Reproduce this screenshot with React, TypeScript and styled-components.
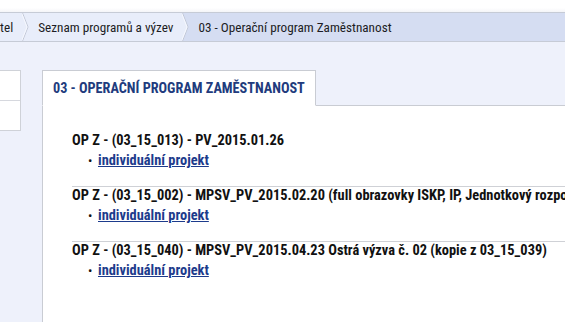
import React from "react";
import styled, { createGlobalStyle } from "styled-components";

const Global = createGlobalStyle`
  html, body { margin: 0; padding: 0; overflow: hidden; }
  body {
    background: #eef1fb;
    font-family: "Roboto Condensed", "Liberation Sans Narrow", sans-serif;
    color: #151515;
  }
`;

const Page = styled.div`
  width: 565px;
  height: 322px;
  overflow: hidden;
  display: flex;
  flex-direction: column;
`;

const TopStrip = styled.div`
  height: 12px;
  background: linear-gradient(#ffffff 0, #ffffff 8px, #f4f5f8 12px);
  flex: none;
`;

const Breadcrumb = styled.nav`
  flex: none;
  height: 28px;
  display: flex;
  align-items: stretch;
  background: #e8edfa;
  border-top: 1px solid #c6cbd6;
  border-bottom: 1px solid #c6cbd6;
  overflow: hidden;
  white-space: nowrap;
`;

const Crumb = styled.div<{ $active?: boolean; $shift?: number }>`
  display: flex;
  align-items: center;
  font-size: 13.2px;
  color: #1c1c24;
  padding: 0 ${(p) => (p.$active ? "0" : "9px")} 0 8px;
  margin-left: ${(p) => (p.$shift ? `${p.$shift}px` : "0")};
  background: ${(p) => (p.$active ? "#d5ddf2" : "transparent")};
  flex: ${(p) => (p.$active ? "1" : "none")};
`;

const ChevronSvg = styled.svg`
  flex: none;
  display: block;
`;

const Chevron = ({ active }: { active?: boolean }) => (
  <ChevronSvg width="8" height="28" viewBox="0 0 8 28" preserveAspectRatio="none">
    {active && <polygon points="0,0 8,0 8,28 0,28 6,14" fill="#d5ddf2" />}
    <polyline points="0.5,0 6,14 0.5,28" fill="none" stroke="#c2c8d6" strokeWidth="1" />
    <polyline points="-0.5,0 5,14 -0.5,28" fill="none" stroke="#f6f8fe" strokeWidth="1" />
  </ChevronSvg>
);

const Main = styled.div`
  flex: 1;
  display: flex;
  align-items: flex-start;
  gap: 21px;
  padding-top: 28px;
  min-height: 0;
`;

const SideBox = styled.div`
  flex: none;
  width: 20px;
  background: #ffffff;
  border: 1px solid #cfd2d8;
  border-left: none;
`;

const SideRow = styled.div<{ $first?: boolean }>`
  height: 29px;
  border-top: ${(p) => (p.$first ? "none" : "1px solid #d6d8de")};
`;

const Content = styled.section`
  flex: 1;
  min-width: 0;
  display: flex;
  flex-direction: column;
`;

const Tabs = styled.div`
  display: flex;
  margin-bottom: -1px;
  position: relative;
  z-index: 1;
`;

const Tab = styled.div`
  box-sizing: border-box;
  height: 36px;
  padding: 0 10px;
  display: flex;
  align-items: center;
  background: #ffffff;
  border: 1px solid #c9ccd3;
  border-bottom: 1px solid #ffffff;
  font-size: 14.2px;
  font-weight: 700;
  color: #213b7d;
  white-space: nowrap;
`;

const Panel = styled.div`
  background: #ffffff;
  border-top: 1px solid #c9ccd3;
  border-left: 1px solid #c9ccd3;
  padding: 25px 0 0 29px;
  height: 260px;
  white-space: nowrap;
  overflow: hidden;
`;

const Item = styled.div<{ $first?: boolean }>`
  border-top: ${(p) => (p.$first ? "1px solid transparent" : "1px solid #cfd1d6")};
  padding: 0 0 15px 0;
`;

const Title = styled.div`
  font-size: 14.4px;
  font-weight: 700;
  line-height: 18px;
  color: #111111;
`;

const LinkRow = styled.div`
  display: flex;
  align-items: center;
  line-height: 20px;
  margin-top: 1px;
  padding-left: 16px;
`;

const Bullet = styled.span`
  width: 10px;
  font-size: 13px;
  color: #111111;
`;

const Link = styled.a`
  font-size: 14.4px;
  font-weight: 700;
  color: #1d3b8c;
  text-decoration: underline;
  cursor: pointer;
`;

const calls = [
  "OP Z - (03_15_013) - PV_2015.01.26",
  "OP Z - (03_15_002) - MPSV_PV_2015.02.20 (full obrazovky ISKP, IP, Jednotkový rozpočet)",
  "OP Z - (03_15_040) - MPSV_PV_2015.04.23 Ostrá výzva č. 02 (kopie z 03_15_039)",
];

export default function App() {
  return (
    <Page>
      <Global />
      <TopStrip />
      <Breadcrumb>
        <Crumb $shift={-34}>Žadatel</Crumb>
        <Chevron />
        <Crumb>Seznam programů a výzev</Crumb>
        <Chevron active />
        <Crumb $active>03 - Operační program Zaměstnanost</Crumb>
      </Breadcrumb>
      <Main>
        <SideBox>
          <SideRow $first />
          <SideRow />
        </SideBox>
        <Content>
          <Tabs>
            <Tab>03 - OPERAČNÍ PROGRAM ZAMĚSTNANOST</Tab>
          </Tabs>
          <Panel>
            {calls.map((c, i) => (
              <Item key={c} $first={i === 0}>
                <Title>{c}</Title>
                <LinkRow>
                  <Bullet>•</Bullet>
                  <Link>individuální projekt</Link>
                </LinkRow>
              </Item>
            ))}
          </Panel>
        </Content>
      </Main>
    </Page>
  );
}
